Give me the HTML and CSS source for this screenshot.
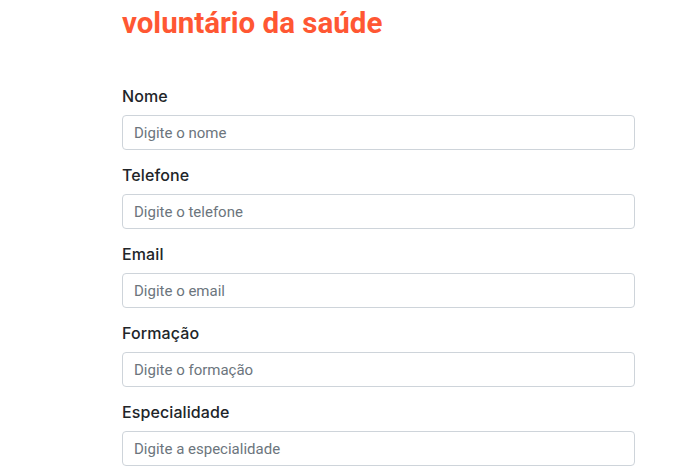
FILE: index.html
```html
<!DOCTYPE html>
<html lang="pt-BR">
<head>
    <meta charset="UTF-8">
    <meta name="viewport" content="width=device-width, initial-scale=1.0">
    <title>Cadastro de voluntário da saúde</title>
    <link rel="stylesheet" href="styles.css">
</head>
<body>
    <div class="container">
        <h1>voluntário da saúde</h1>

        <form class="form-cadastro">
            <div class="campo">
                <label for="nome">Nome</label>
                <input type="text" id="nome" placeholder="Digite o nome">
            </div>
            <div class="campo">
                <label for="telefone">Telefone</label>
                <input type="text" id="telefone" placeholder="Digite o telefone">
            </div>
            <div class="campo">
                <label for="email">Email</label>
                <input type="email" id="email" placeholder="Digite o email">
            </div>
            <div class="campo">
                <label for="formacao">Formação</label>
                <input type="text" id="formacao" placeholder="Digite o formação">
            </div>
            <div class="campo">
                <label for="especialidade">Especialidade</label>
                <input type="text" id="especialidade" placeholder="Digite a especialidade">
            </div>
        </form>
    </div>
</body>
</html>
```

FILE: styles.css
```css
body {
    font-family: 'Roboto', sans-serif;
    background-color: #ffffff;
    color: #212529;
    margin: 0;
    padding: 0;
}
.container {
    width: 513px;
    margin-left: 122px;
}
h1 {
    font-size: 29.5px;
    font-weight: 700;
    color: #ff5733;
    margin: 0;
    padding-top: 7px;
    line-height: 32px;
}
.form-cadastro {
    margin-top: 48px;
}
.campo {
    margin-bottom: 16px;
}
label {
    display: block;
    font-family: 'Inter', sans-serif;
    font-size: 16px;
    font-weight: 500;
    letter-spacing: 0.1px;
    color: #212529;
    margin-bottom: 9px;
    line-height: 19px;
}
input {
    display: block;
    box-sizing: border-box;
    width: 100%;
    height: 35px;
    padding: 6px 11px;
    font-family: 'Roboto', sans-serif;
    font-size: 15px;
    color: #495057;
    border: 1px solid #ced4da;
    border-radius: 4px;
    background-color: #fff;
}
input::placeholder {
    color: #6c757d;
}
```
